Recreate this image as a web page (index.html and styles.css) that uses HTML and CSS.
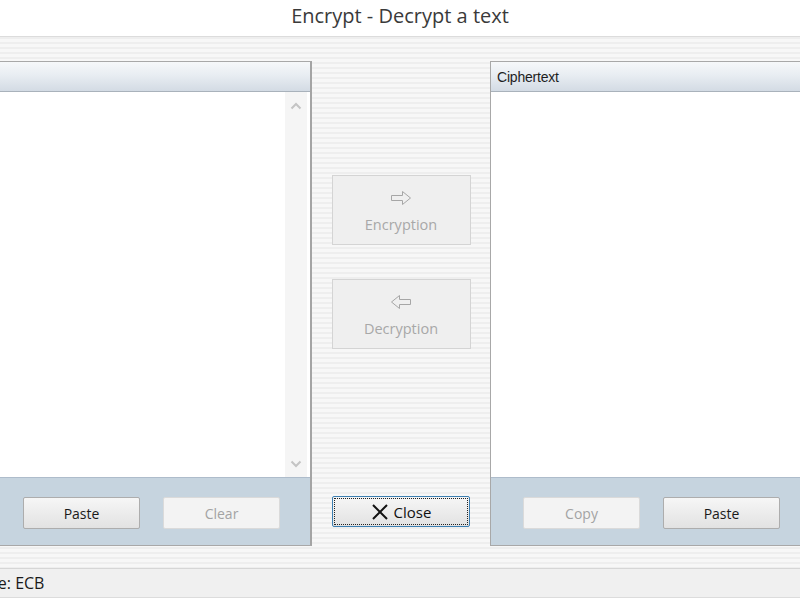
FILE: index.html
```html
<!DOCTYPE html>
<html>
<head>
<meta charset="utf-8">
<link rel="stylesheet" href="styles.css">
<title>Encrypt - Decrypt a text</title>
</head>
<body>
<div class="titlebar">Encrypt - Decrypt a text</div>
<div class="client">
  <div class="panel panel-left">
    <div class="panel-head"><span class="head-label"></span></div>
    <div class="panel-body">
      <div class="textbox"></div>
      <div class="scrollbar">
        <svg class="chev" width="12" height="8" viewBox="0 0 12 8"><path d="M1.5 6.5 L6 2 L10.5 6.5" fill="none" stroke="#c4c4c4" stroke-width="2"/></svg>
        <svg class="chev" width="12" height="8" viewBox="0 0 12 8"><path d="M1.5 1.5 L6 6 L10.5 1.5" fill="none" stroke="#c4c4c4" stroke-width="2"/></svg>
      </div>
    </div>
    <div class="panel-foot foot-left">
      <button class="btn" aria-label="Copy"></button>
      <button class="btn">Paste</button>
      <button class="btn disabled">Clear</button>
    </div>
  </div>
  <div class="middle">
    <button class="big-btn btn-enc">
      <svg width="26" height="16" viewBox="0 0 26 16"><path d="M3.5 5.5 H14.5 V1.5 L22.5 8 L14.5 14.5 V10.5 H3.5 Z" fill="none" stroke="#a6a6a6" stroke-width="1"/></svg>
      <span>Encryption</span>
    </button>
    <button class="big-btn btn-dec">
      <svg width="26" height="16" viewBox="0 0 26 16"><path d="M22.5 5.5 H11.5 V1.5 L3.5 8 L11.5 14.5 V10.5 H22.5 Z" fill="none" stroke="#a6a6a6" stroke-width="1"/></svg>
      <span>Decryption</span>
    </button>
    <button class="btn btn-close">
      <svg width="18" height="18" viewBox="0 0 18 18"><path d="M2 2 L16 16 M16 2 L2 16" stroke="#111" stroke-width="2"/></svg>
      <span>Close</span>
    </button>
  </div>
  <div class="panel panel-right">
    <div class="panel-head"><span class="head-label">Ciphertext</span></div>
    <div class="panel-body"><div class="textbox"></div></div>
    <div class="panel-foot foot-right">
      <button class="btn disabled">Copy</button>
      <button class="btn">Paste</button>
    </div>
  </div>
</div>
<div class="statusbar"><span class="status-text">Mode: ECB</span></div>
</body>
</html>
```
FILE: styles.css
```css
html, body {
  margin: 0;
  padding: 0;
}
body {
  width: 800px;
  height: 600px;
  overflow: hidden;
  background: #ffffff;
  font-family: "Open Sans", "Noto Sans", sans-serif;
  color: #222;
}
.titlebar {
  height: 36px;
  line-height: 32px;
  background: #ffffff;
  border-bottom: 1px solid #dcdcdc;
  text-align: center;
  font-size: 20px;
  color: #3a3a3a;
}
.client {
  height: 507px;
  padding-top: 24px;
  background: repeating-linear-gradient(to bottom, #eeeeee 0px, #eeeeee 2px, #f7f7f7 2px, #f7f7f7 5px);
  display: flex;
  align-items: flex-start;
  margin-left: -40px;
  width: 880px;
}
.panel {
  display: flex;
  flex-direction: column;
  border: 1px solid #a8a8a8;
  box-sizing: border-box;
  height: 485px;
}
.panel-left {
  width: 352px;
  border-right: 2px solid #a4a4a4;
}
.panel-right {
  width: 350px;
  border-right: none;
}
.panel-head {
  height: 30px;
  box-sizing: border-box;
  background: linear-gradient(to bottom, #f6f8fa 0%, #e8edf2 45%, #d3dbe4 100%);
  border-bottom: 1px solid #a9b2bb;
  display: flex;
  align-items: center;
  padding-left: 6px;
}
.head-label {
  font-family: "Liberation Sans", Arial, sans-serif;
  font-size: 14px;
  color: #1e1e1e;
  letter-spacing: -0.2px;
}
.panel-body {
  height: 385px;
  background: #ffffff;
  display: flex;
}
.textbox {
  flex: 1;
}
.scrollbar {
  width: 22px;
  margin-right: 3px;
  background: #f5f5f5;
  display: flex;
  flex-direction: column;
  justify-content: space-between;
  align-items: center;
  padding: 10px 0 9px;
}
.panel-foot {
  flex: 1;
  background: #c6d4df;
  border-top: 1px solid #aebccb;
  display: flex;
  align-items: flex-start;
  padding-top: 19px;
  gap: 23px;
}
.foot-left {
  justify-content: flex-end;
  padding-right: 30px;
}
.foot-right {
  padding-left: 32px;
}
.btn {
  width: 117px;
  height: 32px;
  box-sizing: border-box;
  border: 1px solid #adadad;
  border-radius: 2px;
  background: linear-gradient(to bottom, #f6f6f6 0%, #ececec 50%, #e2e2e2 100%);
  font-family: "Open Sans", "Noto Sans", sans-serif;
  font-size: 14px;
  color: #1a1a1a;
  padding: 0;
  flex-shrink: 0;
}
.btn.disabled {
  background: #f3f3f3;
  border-color: #dadada;
  color: #a3a3a3;
}
.middle {
  width: 178px;
  height: 485px;
  flex-shrink: 0;
  display: flex;
  flex-direction: column;
  align-items: center;
  padding-top: 114px;
  padding-bottom: 19px;
  box-sizing: border-box;
}
.big-btn {
  width: 139px;
  height: 70px;
  box-sizing: border-box;
  border: 1px solid #d4d4d4;
  background: #efefef;
  display: flex;
  flex-direction: column;
  align-items: center;
  justify-content: flex-start;
  gap: 9px;
  padding: 14px 0 0;
  font-family: "Open Sans", "Noto Sans", sans-serif;
  font-size: 14.5px;
  color: #a8a8a8;
}
.btn-dec {
  margin-top: 34px;
}
.btn-close {
  margin-top: auto;
  width: 138px;
  height: 31px;
  border: 1px solid #3c7fb1;
  outline: 1px dotted #222;
  outline-offset: -3px;
  display: flex;
  align-items: center;
  justify-content: center;
  gap: 5px;
  font-size: 15px;
  color: #111;
}
.statusbar {
  height: 28px;
  background: #f0f0f0;
  border-top: 1px solid #d6d6d6;
  border-bottom: 1px solid #dcdcdc;
  display: flex;
  align-items: center;
}
.status-text {
  font-size: 16px;
  color: #1a1a1a;
  margin-left: -36px;
  white-space: nowrap;
}
```
